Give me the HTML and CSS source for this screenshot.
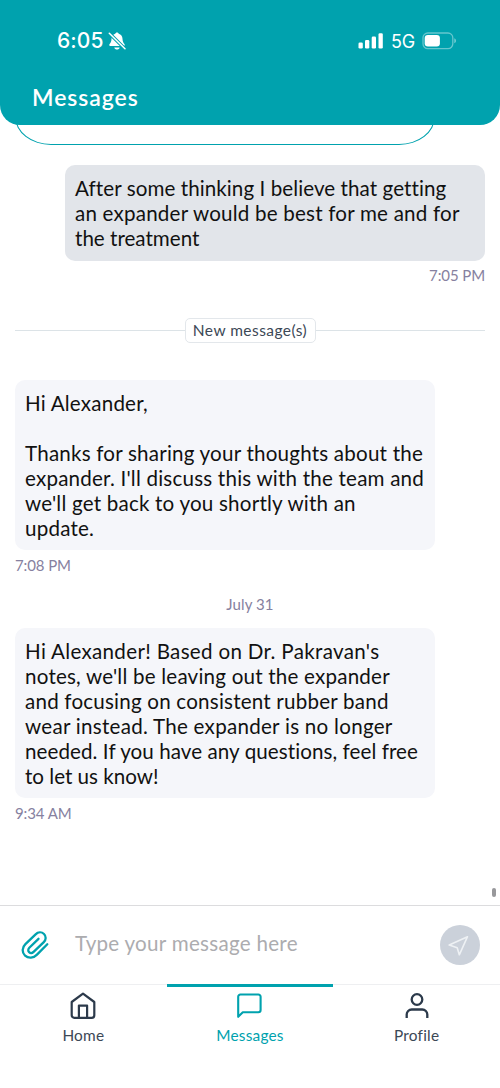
FILE: index.html
```html
<!DOCTYPE html>
<html lang="en">
<head>
<meta charset="utf-8">
<meta name="viewport" content="width=device-width, initial-scale=1">
<title>Messages</title>
<link rel="stylesheet" href="styles.css">
</head>
<body>
<div class="app">
  <header class="header">
    <div class="status">
      <div class="status-left">
        <span class="clock">6:05</span>
        <svg class="bell" width="18" height="18" viewBox="0 0 18 18" fill="#fff"><path d="M9 .5c.9 0 1.600.6 1.700 1.300 2.400.7 3.700 2.500 3.800 5 .1 2.600.7 4 1.900 5.100.5.500.5 2.100-.600 2.100H2.200c-1.100 0-1.100-1.600-.6-2.100C2.800 10.800 3.400 9.400 3.500 6.800c.1-2.500 1.400-4.300 3.800-5C7.400 1.100 8.100.5 9 .5z"/><path d="M6.300 15.500h5.400c-.3 1.400-1.400 2.100-2.700 2.100s-2.400-.7-2.700-2.100z"/><path d="M1.300 1.200 17 16.800" stroke="#00a2ae" stroke-width="3.400"/><path d="M1.300 1.200 17 16.800" stroke="#fff" stroke-width="1.500" stroke-linecap="round"/></svg>
      </div>
      <div class="status-right">
        <svg width="26" height="16" viewBox="0 0 26 16" fill="#fff"><rect x="0.500" y="9.500" width="4.300" height="6" rx="1.300"/><rect x="7" y="7" width="4.300" height="8.500" rx="1.300"/><rect x="13.700" y="3.600" width="4.300" height="11.900" rx="1.300"/><rect x="20.500" y="0.300" width="4.300" height="15.200" rx="1.300"/></svg>
        <span class="network">5G</span>
        <svg class="battery" width="35" height="18" viewBox="0 0 35 18"><rect x="1" y="1" width="29.800" height="15.600" rx="4.800" fill="none" stroke="#fff" stroke-opacity=".4" stroke-width="1.300"/><rect x="2.700" y="2.900" width="15.200" height="11.600" rx="3.200" fill="#fff"/><path d="M32.400 6.300c2 .8 2 4.300 0 5z" fill="#fff" fill-opacity=".5"/></svg>
      </div>
    </div>
    <h1 class="title">Messages</h1>
  </header>

  <main class="chat">
    <div class="outline-bubble"></div>
    <div class="bubble sent"><span class="tight">After some thinking I believe that getting</span><br>an expander would be best for me and for<br><span class="flush">the treatment</span></div>
    <div class="time time-sent">7:05 PM</div>
    <div class="divider"><span class="pill">New message(s)</span></div>
    <div class="bubble received">Hi Alexander,<br><br>Thanks for sharing your thoughts about the<br>expander. I'll discuss this with the team and<br>we'll get back to you shortly with an<br>update.</div>
    <div class="time">7:08 PM</div>
    <div class="date">July 31</div>
    <div class="bubble received"><span class="wide">Hi Alexander! Based on Dr. Pakravan's</span><br>notes, we'll be leaving out the expander<br>and focusing on consistent rubber band<br><span class="loose">wear instead. The expander is no longer</span><br><span class="tight">needed. If you have any questions, feel free</span><br><span class="flush">to let us know!</span></div>
    <div class="time">9:34 AM</div>
    <div class="scroll-thumb"></div>
  </main>

  <div class="composer">
    <svg class="clip" width="30" height="30" viewBox="0 0 30 30" fill="none" stroke="#00a2ae" stroke-width="2.300" stroke-linecap="round" stroke-linejoin="round"><path d="M27.300 14.300 17 24.600c-3.600 3.700-8.500 4.100-11.900 1-3.300-3.200-3.300-8 .3-11.500L15.600 4.300c2.500-2.400 6.100-2.500 8.400-.3s2.200 5.700-.2 8.100L13.600 21.900c-1.400 1.300-3.300 1.400-4.500.2s-1.100-3.100.2-4.400l9.200-8.900"/></svg>
    <span class="placeholder">Type your message here</span>
    <div class="send"><svg width="40" height="40" viewBox="0 0 40 40" fill="none" stroke="#eef1f4" stroke-width="1.600" stroke-linejoin="round"><path d="M27.500 11.700 9.200 20.100l8 2.700 2.100 7z"/></svg></div>
  </div>

  <nav class="tabs">
    <div class="tab">
      <svg width="28" height="28" viewBox="0 0 28 28" fill="none" stroke="#2c3a4b" stroke-width="2.200" stroke-linejoin="round"><path d="M2.700 10 14 1.700 25.300 10v13.300a2.500 2.500 0 0 1-2.500 2.500H5.200a2.500 2.500 0 0 1-2.500-2.500z"/><path d="M9.900 25.800V13.600h8.200v12.200"/></svg>
      <span>Home</span>
    </div>
    <div class="tab active">
      <svg width="28" height="28" viewBox="0 0 28 28" fill="none" stroke="#00a2ae" stroke-width="2.100" stroke-linejoin="round"><path d="M2.200 24.800V4.700A2.200 2.200 0 0 1 4.400 2.500h18a2.200 2.200 0 0 1 2.200 2.200v13.300a2.200 2.200 0 0 1-2.200 2.200H6.800z"/></svg>
      <span>Messages</span>
    </div>
    <div class="tab">
      <svg width="28" height="28" viewBox="0 0 28 28" fill="none" stroke="#2c3a4b" stroke-width="2.300"><circle cx="14" cy="7.500" r="5.300"/><path d="M3.700 26V22.500a5 5 0 0 1 5-5h10.600a5 5 0 0 1 5 5V26"/></svg>
      <span>Profile</span>
    </div>
  </nav>
</div>
</body>
</html>
```
FILE: styles.css
```css
* { box-sizing: border-box; }
body { margin: 0; background: #fff; font-family: Lato, "Open Sans", sans-serif; }
.app { width: 500px; height: 1088px; display: flex; flex-direction: column; overflow: hidden; }
svg { display: block; flex: none; }

.header { position: relative; z-index: 1; height: 125px; flex: none; background: #00a2ae; color: #fff; border-radius: 0 0 20px 20px; padding: 28px 43px 0 32px; }
.status { height: 26px; display: flex; justify-content: space-between; align-items: center; }
.status-left { display: flex; align-items: center; gap: 4px; padding-left: 25px; }
.clock { font: 500 21px/26px Inter, sans-serif; letter-spacing: 0.1px; }
.status-right { display: flex; align-items: center; gap: 7px; }
.network { font: 400 18px/26px Inter, sans-serif; letter-spacing: -0.2px; padding-top: 1px; }
.title { margin: 28px 0 0; font-size: 23px; line-height: 30px; font-weight: 600; letter-spacing: 0.95px; }

.chat { position: relative; flex: none; height: 780px; padding: 0 15px; }
.outline-bubble { width: 420px; height: 60px; margin-top: -40px; border: 1.500px solid #00a2ae; border-radius: 0 0 36px 36px / 0 0 28px 28px; }
.bubble { width: 420px; padding: 11px 10px 9px; border-radius: 10px; font-size: 20.600px; line-height: 25px; color: #111; white-space: nowrap; letter-spacing: 0.200px; }
.tight { letter-spacing: 0.070px; }
.flush { letter-spacing: 0; }
.loose { letter-spacing: 0.260px; }
.wide { letter-spacing: 0.310px; }
.sent { margin: 20px 0 0 50px; height: 96px; background: #e2e5ea; }
.received { background: #f5f6fa; }
.time, .date { font-size: 15px; line-height: 20px; color: #8681a0; margin-top: 5px; letter-spacing: -0.100px; }
.time-sent { margin-top: 4px; text-align: right; }
.date { margin: 19px 0 14px; text-align: center; letter-spacing: .1px; }
.divider { display: flex; align-items: center; margin: 33px 0 37px; height: 25px; }
.divider::before, .divider::after { content: ""; flex: 1; height: 1px; background: #dce3e7; }
.pill { width: 131px; height: 25px; border: 1px solid #e3e7eb; border-radius: 5px; text-align: center; font-size: 15.500px; line-height: 23px; color: #3c4856; letter-spacing: 0.450px; }
.scroll-thumb { position: absolute; right: 4px; bottom: 8px; width: 4px; height: 9px; border-radius: 2px; background: #98989b; }

.composer { height: 79px; flex: none; border-top: 1px solid #dcdcde; display: flex; align-items: center; padding: 0 20px; }
.clip { margin-right: 25px; }
.placeholder { flex: 1; font-size: 20.600px; line-height: 26px; color: #acacaf; letter-spacing: 0.270px; margin-top: -4px; }
.send { width: 40px; height: 40px; border-radius: 50%; background: #cbd1da; }

.tabs { flex: 1; display: grid; grid-template-columns: repeat(3, 1fr); border-top: 1px solid #eeeff1; }
.tab { display: flex; flex-direction: column; align-items: center; padding-top: 7px; font-size: 15.400px; line-height: 20px; gap: 5px; color: #3c4856; letter-spacing: 0.200px; }
.active { color: #00a2ae; margin-top: -1px; padding-top: 8px; box-shadow: inset 0 3px #00a2ae; }
```
